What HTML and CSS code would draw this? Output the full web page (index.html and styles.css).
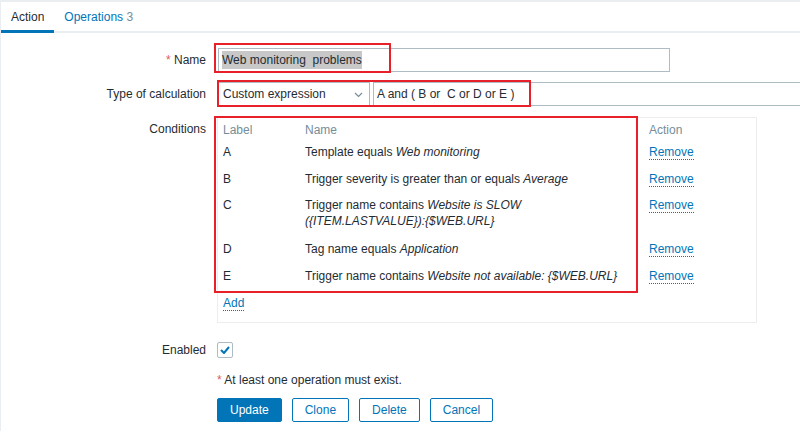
FILE: index.html
```html
<!DOCTYPE html>
<html>
<head>
<meta charset="utf-8">
<link rel="stylesheet" href="styles.css">
</head>
<body>
<div class="page">
  <nav class="tabs">
    <a class="tab active">Action</a>
    <a class="tab">Operations <span class="count">3</span></a>
  </nav>
  <div class="form">
    <div class="row row-name">
      <div class="label"><span class="req">*</span> Name</div>
      <div class="field">
        <div class="input name-input"><span class="sel">Web monitoring&nbsp; problems</span></div>
        <div class="mark mark-name"></div>
      </div>
    </div>
    <div class="row row-calc">
      <div class="label">Type of calculation</div>
      <div class="field calc">
        <div class="select">Custom expression
          <svg class="chev" width="9" height="6" viewBox="0 0 9 6"><path d="M1 1 L4.5 4.5 L8 1" fill="none" stroke="#768d99" stroke-width="1.2"/></svg>
        </div>
        <div class="input expr">A and ( B or&nbsp; C or D or E )</div>
        <div class="mark mark-calc"></div>
      </div>
    </div>
    <div class="row row-cond">
      <div class="label label-top">Conditions</div>
      <div class="field">
        <div class="cond-box">
          <div class="trow thead">
            <div class="c1">Label</div><div class="c2">Name</div><div class="c3">Action</div>
          </div>
          <div class="trow">
            <div class="c1">A</div><div class="c2">Template equals <i>Web monitoring</i></div><div class="c3"><a class="link">Remove</a></div>
          </div>
          <div class="trow">
            <div class="c1">B</div><div class="c2">Trigger severity is greater than or equals <i>Average</i></div><div class="c3"><a class="link">Remove</a></div>
          </div>
          <div class="trow trow-c">
            <div class="c1">C</div><div class="c2">Trigger name contains <i>Website is SLOW<br>({ITEM.LASTVALUE}):{$WEB.URL}</i></div><div class="c3"><a class="link">Remove</a></div>
          </div>
          <div class="trow">
            <div class="c1">D</div><div class="c2">Tag name equals <i>Application</i></div><div class="c3"><a class="link">Remove</a></div>
          </div>
          <div class="trow">
            <div class="c1">E</div><div class="c2">Trigger name contains <i>Website not available: {$WEB.URL}</i></div><div class="c3"><a class="link">Remove</a></div>
          </div>
          <div class="trow">
            <div class="c1"><a class="link">Add</a></div>
          </div>
          <div class="mark mark-cond"></div>
        </div>
      </div>
    </div>
    <div class="row row-enabled">
      <div class="label">Enabled</div>
      <div class="field">
        <span class="checkbox">
          <svg width="10" height="8" viewBox="0 0 10 8"><path d="M1 4 L4 7 L9 1" fill="none" stroke="#0275b8" stroke-width="2"/></svg>
        </span>
      </div>
    </div>
    <div class="row row-msg">
      <div class="label"></div>
      <div class="field msg"><span class="req">*</span> At least one operation must exist.</div>
    </div>
    <div class="row row-btns">
      <div class="label"></div>
      <div class="field buttons">
        <button class="btn primary">Update</button>
        <button class="btn">Clone</button>
        <button class="btn">Delete</button>
        <button class="btn">Cancel</button>
      </div>
    </div>
  </div>
</div>
</body>
</html>
```
FILE: styles.css
```css
html, body {
  margin: 0;
  padding: 0;
  background: #ffffff;
}
body {
  font-family: "Liberation Sans", Arial, sans-serif;
  font-size: 12px;
  line-height: 14px;
  color: #1f2c33;
  overflow: hidden;
  width: 800px;
  height: 433px;
}
.page {
  border-top: 2px solid #ebeef0;
  border-left: 1px solid #ebeef0;
  height: 431px;
  box-sizing: border-box;
}
.tabs {
  display: flex;
  border-bottom: 2px solid #ebeef0;
}
.tab {
  display: block;
  padding: 8px 10px 6px 10px;
  border-bottom: 3px solid transparent;
  margin-bottom: -2px;
  color: #0275b8;
  cursor: pointer;
}
.tab.active {
  color: #1f2c33;
  border-bottom-color: #0275b8;
}
.tab .count {
  color: #768d99;
}
.form {
  padding-top: 15px;
  display: flex;
  flex-direction: column;
}
.row {
  display: flex;
  align-items: center;
}
.label {
  width: 205px;
  flex: none;
  text-align: right;
  margin-right: 12px;
}
.label-top {
  align-self: flex-start;
  padding-top: 5px;
}
.req {
  color: #e45959;
}
.field {
  position: relative;
  flex: none;
}
.input {
  box-sizing: border-box;
  height: 24px;
  border: 1px solid #acbbc4;
  background: #fff;
  padding: 0 4px 0 3px;
  line-height: 22px;
  white-space: pre;
}
.name-input {
  width: 452px;
}
.sel {
  background: #c8c8c8;
  color: #1f2c33;
  padding: 2px 0;
}
.mark {
  position: absolute;
  border: 2px solid #e8202a;
  box-sizing: border-box;
  pointer-events: none;
}
.mark-name {
  left: -4px;
  top: -5px;
  width: 177px;
  height: 30px;
}
.row-calc {
  margin-top: 10px;
}
.calc {
  display: flex;
  gap: 3px;
}
.select {
  box-sizing: border-box;
  width: 152px;
  height: 24px;
  border: 1px solid #acbbc4;
  line-height: 22px;
  padding-left: 4px;
  position: relative;
}
.chev {
  position: absolute;
  right: 6px;
  top: 9px;
}
.expr {
  width: 440px;
  padding-left: 3px;
}
.mark-calc {
  left: -1px;
  top: -2px;
  width: 314px;
  height: 27px;
}
.row-cond {
  margin-top: 11px;
  align-items: flex-start;
}
.row-cond .field {
  margin-left: -1px;
}
.cond-box {
  position: relative;
  box-sizing: border-box;
  width: 540px;
  border: 1px solid #ebeef0;
  padding: 0 5px 5px 5px;
}
.trow {
  display: flex;
  padding: 5px 0 6px 0;
  line-height: 16px;
}
.thead {
  padding: 4px 0 1px 0;
  color: #768d99;
}
.trow-c {
  padding-top: 4px;
  padding-bottom: 7px;
}
.c1 {
  width: 82px;
  flex: none;
}
.c2 {
  width: 344px;
  flex: none;
}
.c3 {
  flex: 1;
}
.link {
  color: #0275b8;
  text-decoration: none;
  border-bottom: 1px dotted #0275b8;
  cursor: pointer;
}
.mark-cond {
  left: -4px;
  top: -2px;
  width: 424px;
  height: 177px;
}
.row-enabled {
  margin-top: 19px;
}
.row-enabled .field {
  margin-left: -1px;
}
.checkbox {
  box-sizing: border-box;
  width: 16px;
  height: 16px;
  border: 1px solid #acbbc4;
  border-radius: 2px;
  display: flex;
  align-items: center;
  justify-content: center;
  background: #fff;
}
.row-msg {
  margin-top: 15px;
}
.msg {
  margin-left: -1px;
}
.row-btns {
  margin-top: 11px;
}
.buttons {
  display: flex;
  gap: 10px;
  margin-left: -1px;
}
.btn {
  font-family: "Liberation Sans", Arial, sans-serif;
  font-size: 12px;
  height: 24px;
  padding: 0 12px;
  border: 1px solid #0275b8;
  border-radius: 2px;
  background: #fff;
  color: #0275b8;
  line-height: 22px;
  margin: 0;
}
.btn.primary {
  background: #0275b8;
  color: #fff;
}
```
